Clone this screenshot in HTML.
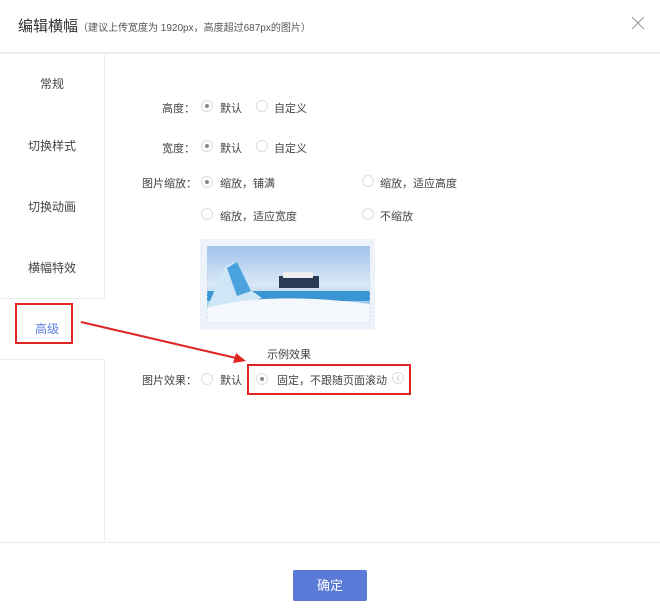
<!DOCTYPE html>
<html><head><meta charset="utf-8"><style>
body{margin:0;width:660px;height:615px;background:#fff;font-family:"Liberation Sans","Noto Sans CJK SC",sans-serif;color:#444;position:relative;overflow:hidden;font-size:11px}
.a{position:absolute;white-space:nowrap}
.r{position:absolute;width:12px;height:12px;border:1px solid #ddd;border-radius:50%;box-sizing:border-box;background:#fff}
.r.on::after{content:"";position:absolute;left:3px;top:3px;width:4px;height:4px;border-radius:50%;background:#888}
.side{font-size:12px;color:#444;width:104px;text-align:center}
</style></head><body>
<div class="a" style="left:18px;top:15px;font-size:15px;color:#333">编辑横幅<span style="font-size:10px;color:#555">（建议上传宽度为 1920px，高度超过687px的图片）</span></div>
<svg class="a" style="left:631px;top:16px" width="14" height="14"><path d="M1 1L13 13M13 1L1 13" stroke="#999" stroke-width="1"/></svg>
<div class="a" style="left:0;top:52px;width:660px;height:2px;background:#eee"></div>
<div class="a" style="left:104px;top:54px;width:1px;height:488px;background:#eee"></div>
<div class="a" style="left:0;top:298px;width:105px;height:62px;background:#fff;border-top:1px solid #eee;border-bottom:1px solid #eee;box-sizing:border-box"></div>
<div class="a side" style="left:0;top:75px">常规</div>
<div class="a side" style="left:0;top:137px">切换样式</div>
<div class="a side" style="left:0;top:198px">切换动画</div>
<div class="a side" style="left:0;top:259px">横幅特效</div>
<div class="a side" style="left:-5px;top:320px;color:#5b7fe0">高级</div>
<div class="a" style="left:15px;top:303px;width:58px;height:41px;border:2px solid #e02424;box-sizing:border-box"></div>
<svg class="a" style="left:0;top:0" width="660" height="615"><line x1="81" y1="322" x2="236" y2="358" stroke="#e02424" stroke-width="2"/><polygon points="246,361 233,363 236,353" fill="#e02424"/></svg>

<div class="a" style="left:162px;top:100px">高度：</div>
<div class="r on" style="left:201px;top:100px"></div><div class="a" style="left:220px;top:100px">默认</div>
<div class="r" style="left:256px;top:100px"></div><div class="a" style="left:274px;top:100px">自定义</div>
<div class="a" style="left:162px;top:140px">宽度：</div>
<div class="r on" style="left:201px;top:140px"></div><div class="a" style="left:220px;top:140px">默认</div>
<div class="r" style="left:256px;top:140px"></div><div class="a" style="left:274px;top:140px">自定义</div>
<div class="a" style="left:142px;top:175px">图片缩放：</div>
<div class="r on" style="left:201px;top:176px"></div><div class="a" style="left:220px;top:175px">缩放，铺满</div>
<div class="r" style="left:362px;top:175px"></div><div class="a" style="left:380px;top:175px">缩放，适应高度</div>
<div class="r" style="left:201px;top:208px"></div><div class="a" style="left:220px;top:208px">缩放，适应宽度</div>
<div class="r" style="left:362px;top:208px"></div><div class="a" style="left:380px;top:208px">不缩放</div>

<div class="a" style="left:200px;top:239px;width:175px;height:91px;background:#eef3fb"></div>
<svg class="a" style="left:207px;top:246px" width="163" height="77">
<defs><linearGradient id="s" x1="0" y1="0" x2="0" y2="1"><stop offset="0" stop-color="#9fc3ec"/><stop offset="0.5" stop-color="#dbe9f7"/><stop offset="1" stop-color="#5aa6de"/></linearGradient></defs>
<rect width="163" height="77" fill="url(#s)"/>
<rect y="45" width="163" height="10" fill="#3c95d3"/>
<path d="M0 62L18 20L30 16L45 45L55 52L0 70Z" fill="#cfe6f6"/>
<path d="M20 22L30 16L44 45L30 50Z" fill="#4aa3dc"/>
<path d="M0 77L0 62Q60 45 163 58L163 77Z" fill="#f4f8fc"/>
<rect x="72" y="30" width="40" height="12" fill="#2b3a55"/><rect x="76" y="26" width="30" height="6" fill="#eee"/>
<rect x="0" y="0" width="163" height="77" fill="none" stroke="#b8cce6" stroke-dasharray="2,2"/>
</svg>
<div class="a" style="left:267px;top:346px">示例效果</div>
<div class="a" style="left:142px;top:372px">图片效果：</div>
<div class="r" style="left:201px;top:373px"></div><div class="a" style="left:220px;top:372px">默认</div>
<div class="r on" style="left:256px;top:373px"></div><div class="a" style="left:277px;top:372px">固定，不跟随页面滚动</div>
<div class="a" style="left:392px;top:372px;width:12px;height:12px;border:1px solid #ddd;border-radius:50%;font-size:8px;color:#aaa;text-align:center;line-height:11px;box-sizing:border-box">i</div>
<div class="a" style="left:247px;top:364px;width:164px;height:31px;border:2px solid #e02424;box-sizing:border-box"></div>

<div class="a" style="left:0;top:542px;width:660px;height:1px;background:#e8e8e8"></div>
<div class="a" style="left:293px;top:570px;width:74px;height:31px;background:#5a7ad8;border-radius:2px;color:#fff;font-size:13px;text-align:center;line-height:31px">确定</div>
</body></html>
